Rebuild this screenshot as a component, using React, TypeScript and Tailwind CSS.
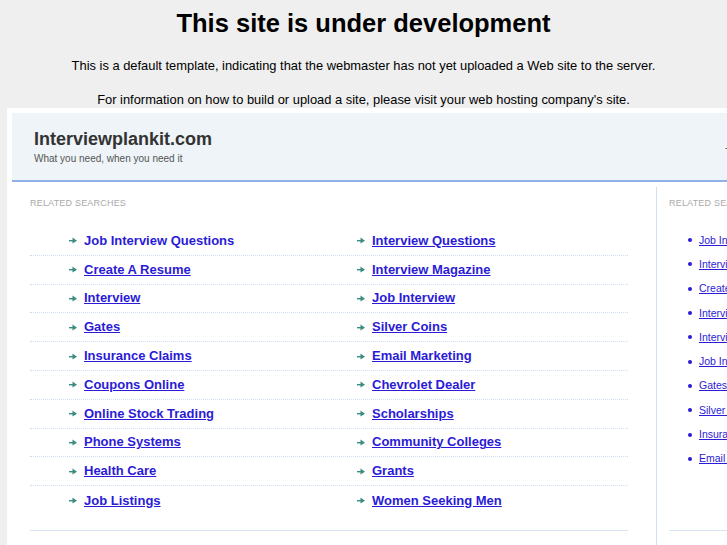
import React from 'react';

const leftLinks: [string, string][] = [
    ['Job Interview Questions', 'Interview Questions'],
    ['Create A Resume', 'Interview Magazine'],
    ['Interview', 'Job Interview'],
    ['Gates', 'Silver Coins'],
    ['Insurance Claims', 'Email Marketing'],
    ['Coupons Online', 'Chevrolet Dealer'],
    ['Online Stock Trading', 'Scholarships'],
    ['Phone Systems', 'Community Colleges'],
    ['Health Care', 'Grants'],
    ['Job Listings', 'Women Seeking Men'],
];

const sideLinks = [
    'Job Interview Questions',
    'Interview Questions',
    'Create A Resume',
    'Interview Magazine',
    'Interview',
    'Job Interview',
    'Gates',
    'Silver Coins',
    'Insurance Claims',
    'Email Marketing',
];

const Arrow = () => (
    <svg width="8" height="7" viewBox="0 0 8 7" className="shrink-0">
        <rect x="0" y="3" width="5" height="1.4" fill="#3a8c80" />
        <polygon points="3.5,0.5 8,3.7 3.5,6.5" fill="#3a8c80" />
    </svg>
);

const LinkCell = ({ text, first }: { text: string; first?: boolean }) => (
    <div className="flex items-center">
        <Arrow />
        <a
            href="#"
            className={`ml-[7px] text-[13px] font-bold leading-[16px] text-[#2b1bd6] ${first ? 'no-underline' : 'underline'}`}
        >
            {text}
        </a>
    </div>
);

const App = () => {
    return (
        <div
            className="h-screen w-full overflow-hidden bg-[#efefef] text-black"
            style={{ fontFamily: '"Liberation Sans", Arial, sans-serif' }}
        >
            <h1 className="mt-[8px] text-center text-[25.5px] font-bold leading-[30px]">
                This site is under development
            </h1>
            <p className="mt-[20px] text-center text-[12.9px] leading-[16px]">
                This is a default template, indicating that the webmaster has not yet uploaded a Web site to the server.
            </p>
            <p className="mt-[18px] text-center text-[12.9px] leading-[16px]">
                For information on how to build or upload a site, please visit your web hosting company's site.
            </p>

            <div className="ml-[7px] w-[1000px] bg-white px-[5px] pt-[5px]">
                {/* header */}
                <div className="flex h-[69px] border-b-2 border-[#8fb1e6] bg-[#eef4f7]">
                    <div className="w-[713px] shrink-0 pl-[22px] pt-[16px]">
                        <div className="text-[18px] font-bold leading-[20px] text-[#333333]">Interviewplankit.com</div>
                        <div className="mt-[4px] text-[10px] leading-[12px] text-[#555555]">What you need, when you need it</div>
                    </div>
                    <div className="pt-[29px] text-[10px] leading-[12px] text-[#555555]">- Home</div>
                </div>

                {/* body */}
                <div className="flex h-[400px]">
                    <div className="ml-[18px] w-[598px] shrink-0 pt-[16px]">
                        <div className="text-[9px] leading-[11px] tracking-[0.2px] text-[#aaaaaa]">RELATED SEARCHES</div>
                        <div className="mt-[18px]">
                            {leftLinks.map(([a, b], i) => (
                                <div
                                    key={a}
                                    className={`grid h-[28.8px] grid-cols-[327px_1fr] items-center ${i < leftLinks.length - 1 ? 'border-b border-dotted border-[#cfddf1]' : ''}`}
                                >
                                    <div className="pl-[39px]">
                                        <LinkCell text={a} first={i === 0} />
                                    </div>
                                    <div>
                                        <LinkCell text={b} />
                                    </div>
                                </div>
                            ))}
                        </div>
                        <div className="mt-[15px] border-t border-[#d9e4f3]" />
                    </div>

                    <div className="ml-[28px] mt-[5px] w-px shrink-0 bg-[#d3e0f2]" />

                    <div className="ml-[12px] w-[250px] shrink-0 pt-[16px]">
                        <div className="text-[9px] leading-[11px] tracking-[0.2px] text-[#aaaaaa]">RELATED SEARCHES</div>
                        <div className="mt-[19px]">
                            {sideLinks.map(s => (
                                <div key={s} className="flex h-[24.3px] items-center pl-[19px]">
                                    <span className="h-[4px] w-[4px] shrink-0 rounded-full bg-[#2b1bd6]" />
                                    <a href="#" className="ml-[7px] text-[10.5px] leading-[13px] text-[#2b1bd6] underline">
                                        {s}
                                    </a>
                                </div>
                            ))}
                        </div>
                        <div className="mt-[59px] border-t border-[#d9e4f3]" />
                    </div>
                </div>
            </div>
        </div>
    );
};

export default App;
